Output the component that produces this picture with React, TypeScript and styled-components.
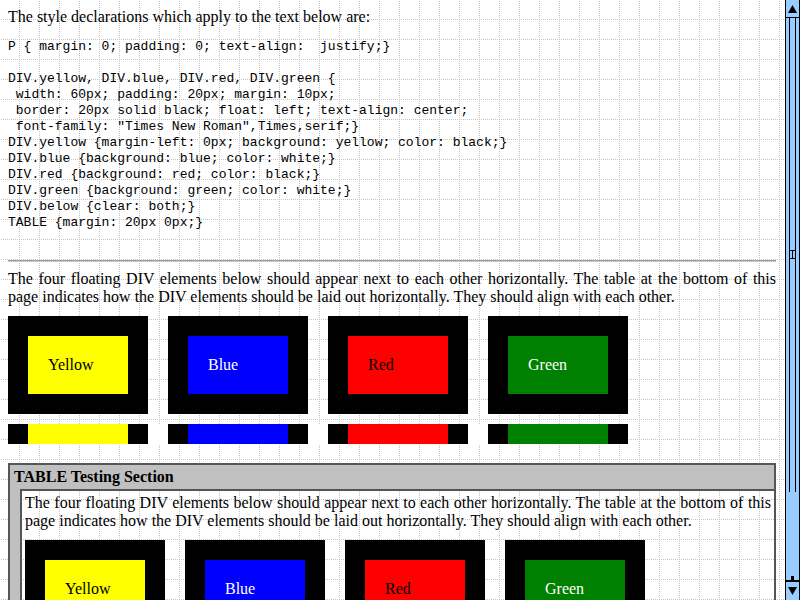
import React from "react";
import styled, { createGlobalStyle } from "styled-components";

const GlobalStyle = createGlobalStyle`
  html, body {
    margin: 0;
    padding: 0;
    overflow: hidden;
    background: #ffffff;
  }
`;

const Screen = styled.div`
  width: 800px;
  height: 600px;
  display: flex;
  overflow: hidden;
`;

const Page = styled.div`
  flex: 1;
  min-width: 0;
  height: 600px;
  overflow: hidden;
  box-sizing: border-box;
  padding: 8px 9px 0 8px;
  background-color: #ffffff;
  background-image:
    conic-gradient(from 90deg at 1px 19px, #c4c4c4 0 90deg, transparent 0),
    conic-gradient(from 90deg at 19px 1px, #c4c4c4 0 90deg, transparent 0);
  background-size: 2px 20px, 20px 2px;
  font-family: "Liberation Serif", "Times New Roman", serif;
  font-size: 16px;
  line-height: 18px;
  color: #000;
`;

const Para = styled.p<{ $top?: number }>`
  margin: ${(p) => p.$top ?? 0}px 0 0 0;
  padding: 0;
  text-align: justify;
`;

const Code = styled.pre`
  margin: 13px 0 0 0;
  font-family: "Liberation Mono", "Courier New", monospace;
  font-size: 13px;
  line-height: 16px;
  white-space: pre;
`;

const Rule = styled.div`
  margin-top: 29px;
  height: 0;
  border-top: 1px solid #9c9c9c;
  border-bottom: 1px solid #c8c8c8;
`;

const BoxRow = styled.div`
  display: flex;
  align-items: flex-start;
`;

const ColorBox = styled.div<{ $bg: string; $fg: string; $first?: boolean }>`
  flex: none;
  width: 60px;
  padding: 20px;
  border: 20px solid #000;
  margin: 10px 10px 10px ${(p) => (p.$first ? 0 : 10)}px;
  background: ${(p) => p.$bg};
  color: ${(p) => p.$fg};
  font-family: "Liberation Serif", "Times New Roman", serif;
  font-size: 16px;
  line-height: 18px;
  text-align: left;
`;

const BarRow = styled.div`
  display: flex;
  height: 20px;
`;

const BarCell = styled.div<{ $bg: string; $w: number }>`
  flex: none;
  width: ${(p) => p.$w}px;
  height: 20px;
  background: ${(p) => p.$bg};
`;

const TestTable = styled.div`
  margin-top: 19px;
  border: 2px solid #555555;
  border-bottom: none;
`;

const TableHeader = styled.div`
  background: #c0c0c0;
  height: 24px;
  line-height: 24px;
  padding-left: 4px;
  font-weight: bold;
`;

const TableBody = styled.div`
  display: flex;
`;

const SideCell = styled.div`
  flex: none;
  width: 10px;
  background: #c0c0c0;
  border-right: 2px solid #555555;
`;

const ContentCell = styled.div`
  flex: 1;
  min-width: 0;
  border-top: 2px solid #555555;
  padding: 3px 3px 0 3px;
`;

const ScrollBar = styled.div`
  flex: none;
  width: 15px;
  height: 600px;
  box-sizing: border-box;
  border-left: 1px solid #000;
  border-right: 1px solid #000;
  background: #99ccff;
  display: flex;
  flex-direction: column;
`;

const ArrowButton = styled.div<{ $down?: boolean }>`
  flex: none;
  height: ${(p) => (p.$down ? 18 : 17)}px;
  display: flex;
  align-items: center;
  justify-content: center;
  ${(p) => (p.$down ? "border-top: 2px solid #000;" : "border-bottom: 1px solid #000;")}
`;

const Track = styled.div`
  flex: 1;
  display: flex;
  flex-direction: column;
  align-items: center;
`;

const Thumb = styled.div`
  flex: none;
  width: 7px;
  height: 474px;
  border-left: 1px solid #000;
  border-right: 1px solid #000;
  display: flex;
  flex-direction: column;
  align-items: center;
  padding-top: 232px;
  box-sizing: border-box;
`;

const Spacer = styled.div`
  flex: 1;
`;

const Stem = styled.div`
  flex: none;
  width: 3px;
  height: 4px;
  background: #000;
`;

const boxes = [
  { name: "Yellow", bg: "#ffff00", fg: "#000000" },
  { name: "Blue", bg: "#0000ff", fg: "#ffffff" },
  { name: "Red", bg: "#ff0000", fg: "#000000" },
  { name: "Green", bg: "#008000", fg: "#ffffff" },
];

const codeText = `P { margin: 0; padding: 0; text-align:  justify;}

DIV.yellow, DIV.blue, DIV.red, DIV.green {
 width: 60px; padding: 20px; margin: 10px;
 border: 20px solid black; float: left; text-align: center;
 font-family: "Times New Roman",Times,serif;}
DIV.yellow {margin-left: 0px; background: yellow; color: black;}
DIV.blue {background: blue; color: white;}
DIV.red {background: red; color: black;}
DIV.green {background: green; color: white;}
DIV.below {clear: both;}
TABLE {margin: 20px 0px;}`;

const floatText =
  "The four floating DIV elements below should appear next to each other horizontally. The table at the bottom of this page indicates how the DIV elements should be laid out horizontally. They should align with each other.";

const Boxes: React.FC = () => (
  <BoxRow>
    {boxes.map((b, i) => (
      <ColorBox key={b.name} $bg={b.bg} $fg={b.fg} $first={i === 0}>
        {b.name}
      </ColorBox>
    ))}
  </BoxRow>
);

const Bars: React.FC = () => (
  <BarRow>
    {boxes.map((b, i) => (
      <React.Fragment key={b.name}>
        <BarCell $bg="#000" $w={20} />
        <BarCell $bg={b.bg} $w={100} />
        <BarCell $bg="#000" $w={20} />
        {i < boxes.length - 1 && <BarCell $bg="#fff" $w={20} />}
      </React.Fragment>
    ))}
  </BarRow>
);

const UpArrow = () => (
  <svg width="9" height="8" viewBox="0 0 9 8">
    <polygon points="4.5,0 9,8 0,8" fill="#000" />
  </svg>
);

const DownArrow = () => (
  <svg width="9" height="8" viewBox="0 0 9 8">
    <polygon points="0,0 9,0 4.5,8" fill="#000" />
  </svg>
);

const Grip = () => (
  <svg width="5" height="9" viewBox="0 0 5 9">
    <rect x="0" y="0" width="5" height="1" fill="#000" />
    <rect x="2" y="0" width="1" height="9" fill="#000" />
    <rect x="0" y="8" width="5" height="1" fill="#000" />
  </svg>
);

export default function App() {
  return (
    <>
      <GlobalStyle />
      <Screen>
        <Page>
          <Para>The style declarations which apply to the text below are:</Para>
          <Code>{codeText}</Code>
          <Rule />
          <Para $top={8}>{floatText}</Para>
          <Boxes />
          <Bars />
          <TestTable>
            <TableHeader>TABLE Testing Section</TableHeader>
            <TableBody>
              <SideCell />
              <ContentCell>
                <Para>{floatText}</Para>
                <Boxes />
                <Bars />
              </ContentCell>
            </TableBody>
          </TestTable>
        </Page>
        <ScrollBar>
          <ArrowButton>
            <UpArrow />
          </ArrowButton>
          <Track>
            <Thumb>
              <Grip />
            </Thumb>
            <Spacer />
            <Stem />
          </Track>
          <ArrowButton $down>
            <DownArrow />
          </ArrowButton>
        </ScrollBar>
      </Screen>
    </>
  );
}
